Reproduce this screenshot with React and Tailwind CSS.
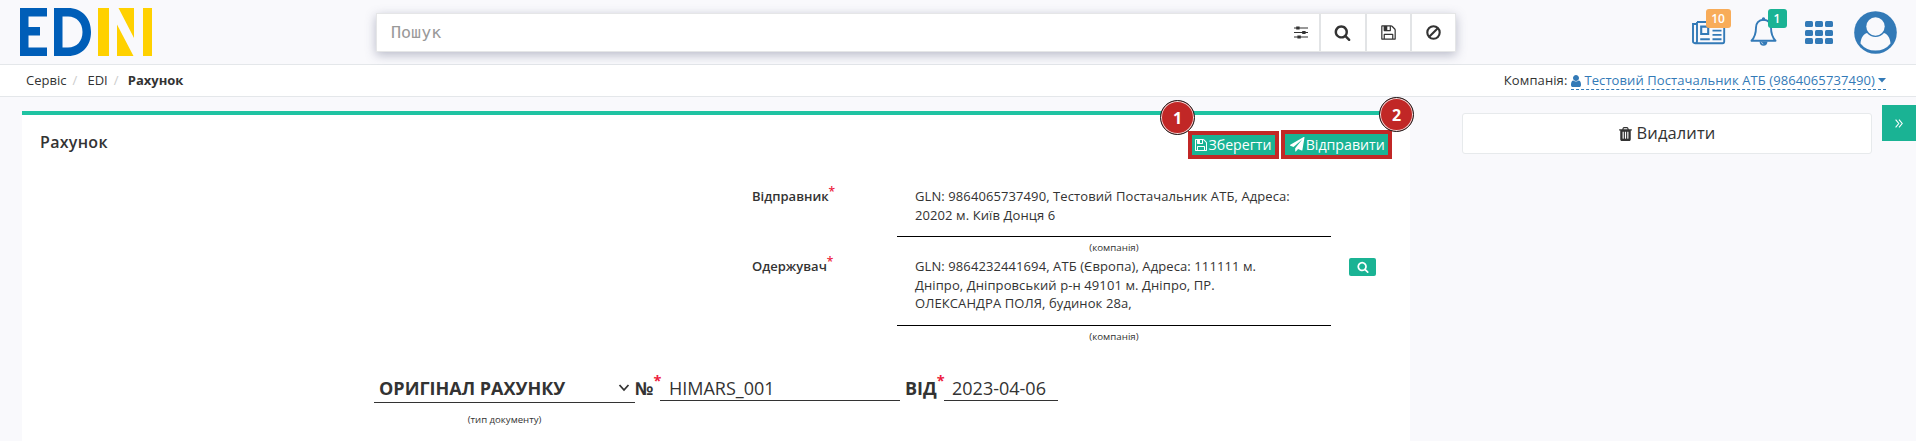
import React from "react";

const GLYPHS = {
  search:
    "M1216 832q0-185-131.5-316.5t-316.5-131.5-316.5 131.5-131.5 316.5 131.5 316.5 316.5 131.5 316.5-131.5 131.5-316.5zm512 832q0 52-38 90t-90 38q-54 0-90-38l-343-342q-179 124-399 124-143 0-273.5-55.5t-225-150-150-225-55.5-273.5 55.5-273.5 150-225 225-150 273.5-55.5 273.5 55.5 225 150 150 225 55.5 273.5q0 220-124 399l343 343q37 37 37 90z",
  save:
    "M512 1536h768v-384h-768v384zm896 0h128v-896q0-14-10-38.5t-20-34.5l-281-281q-10-10-34-20t-39-10v416q0 40-28 68t-68 28h-576q-40 0-68-28t-28-68v-416h-128v1280h128v-416q0-40 28-68t68-28h832q40 0 68 28t28 68v416zm-384-928v-320q0-13-9.5-22.5t-22.5-9.5h-192q-13 0-22.5 9.5t-9.5 22.5v320q0 13 9.5 22.5t22.5 9.5h192q13 0 22.5-9.5t9.5-22.5zm640 32v928q0 40-28 68t-68 28h-1344q-40 0-68-28t-28-68v-1344q0-40 28-68t68-28h928q40 0 88 20t76 48l280 280q28 28 48 76t20 88z",
  plane:
    "M1764 11q33 24 27 64l-256 1536q-5 29-32 45-14 8-31 8-11 0-24-5l-453-185-242 295q-18 23-49 23-13 0-22-4-19-7-30.5-23.5t-11.5-36.5v-349l864-1059-1069 925-395-162q-37-14-40-55-2-40 32-59l1664-960q15-9 32-9 20 0 36 11z",
  trash:
    "M704 1376v-704q0-14-9-23t-23-9h-64q-14 0-23 9t-9 23v704q0 14 9 23t23 9h64q14 0 23-9t9-23zm256 0v-704q0-14-9-23t-23-9h-64q-14 0-23 9t-9 23v704q0 14 9 23t23 9h64q14 0 23-9t9-23zm256 0v-704q0-14-9-23t-23-9h-64q-14 0-23 9t-9 23v704q0 14 9 23t23 9h64q14 0 23-9t9-23zm-544-992h448l-48-117q-7-9-17-11h-317q-10 2-17 11zm928 32v64q0 14-9 23t-23 9h-96v948q0 83-47 143.5t-113 60.5h-832q-66 0-113-58.5t-47-141.5v-952h-96q-14 0-23-9t-9-23v-64q0-14 9-23t23-9h309l70-167q15-37 54-63t79-26h320q40 0 79 26t54 63l70 167h309q14 0 23 9t9 23z",
  user:
    "M1536 1399q0 109-62.5 187t-150.5 78h-854q-88 0-150.5-78t-62.5-187q0-85 8.5-160.5t31.5-152 58.5-131 94-89 134.5-34.5q131 128 313 128t313-128q76 0 134.5 34.5t94 89 58.5 131 31.5 152 8.5 160.5zm-256-887q0 159-112.5 271.5t-271.5 112.5-271.5-112.5-112.5-271.5 112.5-271.5 271.5-112.5 271.5 112.5 112.5 271.5z",
};

function Glyph({ name, className, box = "0 0 1792 1792" }) {
  return (
    <svg viewBox={box} fill="currentColor" className={className}>
      <path d={GLYPHS[name]} />
    </svg>
  );
}

function Logo() {
  return (
    <svg width="132" height="48" viewBox="0 0 132 48" className="block">
      <g fill="#005eb8">
        <path d="M0 0H27V8.5H8.500V19H20V27.500H8.500V39.500H27V48H0Z" />
        <path
          fillRule="evenodd"
          d="M34 0H48C62 0 71 10 71 24S62 48 48 48H34ZM42.500 8.500V39.500H48C57 39.500 62.500 33 62.500 24S57 8.500 48 8.500Z"
        />
      </g>
      <g fill="#ffd100">
        <path d="M78 0H89V48H78ZM123 0H132V48H123ZM98.500 0H114V30ZM97 16.500L113.500 48H97Z" />
      </g>
    </svg>
  );
}

function Sliders() {
  return (
    <svg width="14" height="13" viewBox="0 0 14 13" className="block">
      <path d="M0 2H14M0 6.500H14M0 11H14" stroke="#333" strokeWidth="1.200" />
      <path d="M2.200 .4h3.400v3.200h-3.400zM8.200 4.900h3.400v3.200h-3.400zM3.400 9.400h3.400v3.200h-3.400z" fill="#333" />
    </svg>
  );
}

function SearchBar() {
  return (
    <div className="flex h-[39px] w-[1080px] border border-[#e5e6e7] bg-white shadow-[0_3px_10px_rgba(70,75,110,0.36)]">
      <div className="flex flex-1 items-center justify-between pr-[11px] pl-[14px]">
        <span className="font-['DejaVu_Sans_Mono',monospace] text-[16.7px] leading-none text-[#999]">Пошук</span>
        <Sliders />
      </div>
      <div className="flex w-[46px] items-center justify-center border-l-2 border-[#e2e4e6] pr-[2px]">
        <Glyph name="search" className="size-[17px]" />
      </div>
      <div className="flex w-[45px] items-center justify-center border-l-2 border-[#e2e4e6]">
        <Glyph name="save" className="size-[17px]" />
      </div>
      <div className="flex w-[45px] items-center justify-center border-l-2 border-[#e2e4e6]">
        <svg width="15" height="15" viewBox="0 0 15 15" fill="none" stroke="#333" strokeWidth="2.100">
          <circle cx="7.500" cy="7.500" r="6.200" />
          <path d="M3.200 11.800L11.800 3.200" />
        </svg>
      </div>
    </div>
  );
}

function HeaderIcons() {
  return (
    <div className="flex text-[#337ab7]">
      <div className="relative mt-[21px] h-6 w-[34px]">
        <svg width="34" height="24" viewBox="0 0 34 24" fill="none" stroke="currentColor" strokeWidth="1.900">
          <path d="M5 1H32.200V20.600Q32.200 22.200 30.600 22.200H3Q1 22.200 1 20.200V3H5M5 1V20Q5 22.200 3 22.200" />
          <path d="M9.200 5.600H16.200V13H9.200Z" strokeWidth="2.100" />
          <path d="M20.500 5.300H29.500M20.500 9.600H29.500M20.500 13.900H29.500M8.200 18.200H17.800M20.500 18.200H29.500" />
        </svg>
        <span className="absolute -top-3 left-[14px] flex h-[19px] w-[25px] items-center justify-center rounded-[3px] bg-[#f8ac59] text-[12px] font-semibold text-white">
          10
        </span>
      </div>
      <div className="relative mt-[17px] ml-6 h-[29px] w-[27px]">
        <svg width="27" height="29" viewBox="0 0 27 29">
          <path
            d="M13.500 2.800C8.500 2.800 6 6.700 6 10.500C6 17 4.500 20.500 1.500 23.700H25.500C22.500 20.500 21 17 21 10.500C21 6.700 18.500 2.800 13.500 2.800Z"
            fill="none"
            stroke="currentColor"
            strokeWidth="1.900"
            strokeLinejoin="round"
          />
          <path d="M9.500 24.500H17.500Q17.200 28.700 13.500 28.700T9.500 24.500Z" fill="currentColor" />
          <circle cx="13.500" cy="2" r="1.700" fill="currentColor" />
          <path d="M11.500 25Q11.700 26.800 13.300 27" fill="none" stroke="#f9f9fc" strokeWidth=".6" />
        </svg>
        <span className="absolute -top-2 left-[18px] flex h-[19px] w-[19px] items-center justify-center rounded-[3px] bg-[#1ab394] text-[12px] font-semibold text-white">
          1
        </span>
      </div>
      <div className="mt-[21px] ml-7 grid h-[23px] w-[28.500px] grid-cols-3 gap-x-[2px] gap-y-[2.500px]">
        {Array.from({ length: 9 }, (_, i) => (
          <i key={i} className="rounded-[1.500px] bg-[#337ab7]" />
        ))}
      </div>
      <svg width="43" height="43" viewBox="0 0 43 43" className="mt-[10.500px] ml-[21px]">
        <circle cx="21.500" cy="21.500" r="21.300" fill="currentColor" />
        <path
          d="M6.500 32.500C7 26.500 9.500 23 13 22Q16.500 26 21.500 26T30 22C33.500 23 36 26.500 36.500 32.500Q31 39.600 21.500 39.600T6.500 32.500Z"
          fill="#f9f9fc"
        />
        <circle cx="21.500" cy="15.500" r="9.200" fill="#f9f9fc" />
      </svg>
    </div>
  );
}

function Star({ className }) {
  return <span className={`text-[#ed1c40] ${className}`}>*</span>;
}

function PartyRow({ label, lines, button, className }) {
  return (
    <div className={`flex ${className}`}>
      <div className="w-[145px] leading-[18.570px] font-semibold">
        {label}
        <Star className="relative -top-[5px] text-[12px]" />
      </div>
      <div className="w-[434px]">
        <div className="border-b border-black pb-[12px] pl-[18px] leading-[18.570px] tracking-[0.095px] whitespace-nowrap">
          {lines.map((l) => (
            <div key={l}>{l}</div>
          ))}
        </div>
        <div className="pt-[4px] text-center text-[9.750px] leading-[13px]">(компанія)</div>
      </div>
      {button && (
        <div className="mt-[1px] ml-[18px] flex h-[18px] w-[27px] items-center justify-center rounded-[2px] bg-[#1ab394] text-white">
          <Glyph name="search" className="size-[12px]" />
        </div>
      )}
    </div>
  );
}

function Marker({ n, className }) {
  return (
    <span
      className={`absolute flex size-[35px] items-center justify-center rounded-full border border-[#222] bg-[#c12726] text-[16px] font-bold text-white shadow-[inset_0_0_0_1px_#f3dada] ${className}`}
    >
      {n}
    </span>
  );
}

export default function App() {
  return (
    <div className="flex h-[441px] w-[1916px] flex-col overflow-hidden bg-[#f9f9fc] font-['Open_Sans',sans-serif] text-[13px] text-[#333]">
      <header className="flex h-[65px] border-b border-[#e4e7ea] pr-[19px] pl-5">
        <div className="w-[356px] pt-2">
          <Logo />
        </div>
        <div className="pt-[13px]">
          <SearchBar />
        </div>
        <div className="ml-auto">
          <HeaderIcons />
        </div>
      </header>

      <nav className="flex h-8 shrink-0 items-center border-b border-[#e4e7ea] bg-white pr-[30px] pl-[26px]">
        <span>Сервіс</span>
        <span className="w-[21px] pl-[6px] text-[#ccc]">/</span>
        <span>EDI</span>
        <span className="w-[20px] pl-[6px] text-[#ccc]">/</span>
        <b>Рахунок</b>
        <span className="ml-auto tracking-[0.1px]">Компанія:</span>
        <span className="ml-1 flex h-[18px] items-center border-b border-dashed border-[#337ab7] pt-[1px] tracking-[0.095px] text-[#337ab7]">
          <Glyph name="user" box="256 128 1280 1536" className="mr-[3px] h-[12px] w-[10px]" />
          Тестовий Постачальник АТБ (9864065737490)
          <svg width="8" height="5" viewBox="0 0 8 5" className="ml-[3px]">
            <path d="M0 0H8L4 4.500Z" fill="currentColor" />
          </svg>
        </span>
      </nav>

      <div className="flex flex-1 pl-[22px]">
        <main className="relative mt-[14px] w-[1388px] border-t-4 border-[#1fc3a2] bg-white">
          <div className="flex h-[64px] items-start justify-between pr-[18px] pl-[18px]">
            <h1 className="mt-[15px] text-[16px] leading-6 font-semibold tracking-[0.3px]">Рахунок</h1>
            <div className="flex items-end gap-[2px] pt-[15px] text-[14.200px] text-white">
              <button className="flex h-7 w-[91px] items-center justify-center border-4 border-[#c12726] bg-[#1ab394] whitespace-nowrap">
                <Glyph name="save" box="128 128 1536 1536" className="mr-[1px] size-[12px] shrink-0" />
                Зберегти
              </button>
              <button className="flex h-[29px] w-[111px] items-center justify-center border-4 border-[#c12726] bg-[#1ab394] pl-[2px] whitespace-nowrap">
                <Glyph name="plane" className="mr-[1px] size-[14.500px] shrink-0" />
                Відправити
              </button>
            </div>
          </div>
          <Marker n="1" className="-top-[15px] left-[1138px]" />
          <Marker n="2" className="-top-[18px] left-[1357px]" />

          <PartyRow
            className="mt-[8px] ml-[730px] h-[70px]"
            label="Відправник"
            lines={["GLN: 9864065737490, Тестовий Постачальник АТБ, Адреса:", "20202 м. Київ Донця 6"]}
          />
          <PartyRow
            className="ml-[730px] h-[114px]"
            label="Одержувач"
            button
            lines={[
              "GLN: 9864232441694, АТБ (Європа), Адреса: 111111 м.",
              "Дніпро, Дніпровський р-н 49101 м. Дніпро, ПР.",
              "ОЛЕКСАНДРА ПОЛЯ, будинок 28а,",
            ]}
          />

          <div className="ml-[352px] flex text-[18px] leading-[26px]">
            <div className="w-[261px]">
              <div className="flex h-[32px] items-center justify-between border-b border-[#333] pt-[3px] pr-[5px] pl-[5px] font-bold">
                ОРИГІНАЛ РАХУНКУ
                <svg width="12" height="8" viewBox="0 0 12 8" fill="none" stroke="#333" strokeWidth="1.800">
                  <path d="M1.500 1L6 6L10.500 1" />
                </svg>
              </div>
              <div className="mt-[10px] text-center text-[9.600px] leading-[13px]">(тип документу)</div>
            </div>
            <div className="flex w-[25px] pt-[4px] font-bold">
              №<Star className="relative -top-[7px] text-[14.500px]" />
            </div>
            <div className="h-[30px] w-[240px] border-b border-[#333] pt-[4px] pl-[9px]">HIMARS_001</div>
            <div className="ml-[5px] flex w-[39px] pt-[4px] font-bold">
              ВІД
              <Star className="relative -top-[7px] text-[14.500px]" />
            </div>
            <div className="h-[30px] w-[114px] border-b border-[#333] pt-[4px] pl-[8px]">2023-04-06</div>
          </div>
        </main>

        <aside className="mt-4 ml-[52px] h-[41px] w-[410px]">
          <button className="flex h-full w-full items-center justify-center gap-[5px] rounded-[3px] border border-[#e7eaec] bg-white text-[16.500px] tracking-[0.1px]">
            <Glyph name="trash" box="192 128 1408 1536" className="h-[14px] w-[13px]" />
            Видалити
          </button>
        </aside>
        <div className="mt-2 ml-auto flex h-9 w-[34px] items-center justify-center bg-[#1ab394]">
          <svg width="8" height="9" viewBox="0 0 8 9" fill="none" stroke="#fff" strokeWidth="1.100">
            <path d="M.6 .6L3.800 4.500L.6 8.400M4 .6L7.200 4.500L4 8.400" />
          </svg>
        </div>
      </div>
    </div>
  );
}
